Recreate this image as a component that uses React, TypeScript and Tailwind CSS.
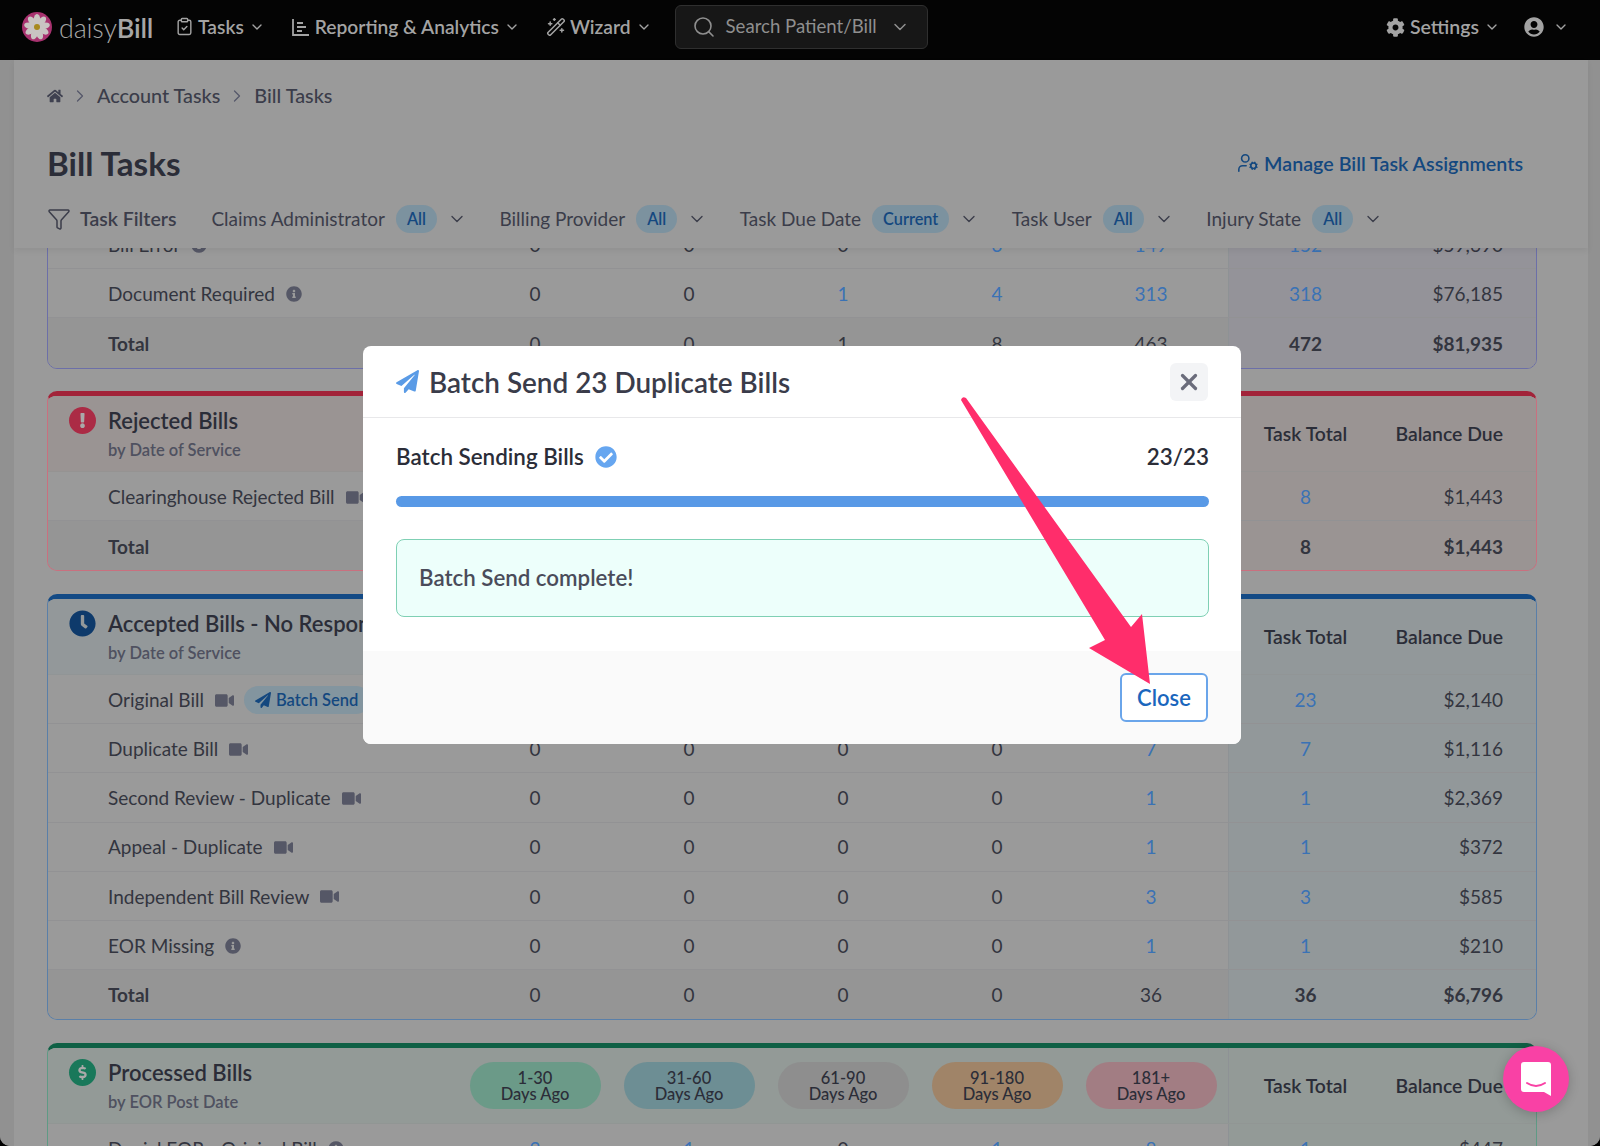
import type { ReactNode } from "react";
import { ChevronDown, ChevronRight, Filter, Search, UserCog, WandSparkles, ClipboardCheck, X } from "lucide-react";
import { FaCheckCircle, FaClock, FaCog, FaDollarSign, FaExclamation, FaHome, FaInfoCircle, FaPaperPlane, FaUserCircle, FaVideo } from "react-icons/fa";

type Note = "video" | "info" | "batch" | null;

interface Row {
  label: string;
  note?: Note;
  values: (string | number)[];
  total: string | number;
  balance: string;
  bold?: boolean;
}

const TOP_ROWS: Row[] = [
  { label: "Bill Error", note: "info", values: [0, 0, 0, 3, 149], total: 152, balance: "$59,690" },
  { label: "Document Required", note: "info", values: [0, 0, 1, 4, 313], total: 318, balance: "$76,185" },
  { label: "Total", values: [0, 0, 1, 8, 463], total: 472, balance: "$81,935", bold: true },
];

const REJECTED_ROWS: Row[] = [
  { label: "Clearinghouse Rejected Bill", note: "video", values: [0, 0, 0, 0, 8], total: 8, balance: "$1,443" },
  { label: "Total", values: [0, 0, 0, 0, 8], total: 8, balance: "$1,443", bold: true },
];

const ACCEPTED_ROWS: Row[] = [
  { label: "Original Bill", note: "batch", values: [0, 0, 0, 0, 23], total: 23, balance: "$2,140" },
  { label: "Duplicate Bill", note: "video", values: [0, 0, 0, 0, 7], total: 7, balance: "$1,116" },
  { label: "Second Review - Duplicate", note: "video", values: [0, 0, 0, 0, 1], total: 1, balance: "$2,369" },
  { label: "Appeal - Duplicate", note: "video", values: [0, 0, 0, 0, 1], total: 1, balance: "$372" },
  { label: "Independent Bill Review", note: "video", values: [0, 0, 0, 0, 3], total: 3, balance: "$585" },
  { label: "EOR Missing", note: "info", values: [0, 0, 0, 0, 1], total: 1, balance: "$210" },
  { label: "Total", values: [0, 0, 0, 0, 36], total: 36, balance: "$6,796", bold: true },
];

const PROCESSED_ROWS: Row[] = [
  { label: "Denial EOR - Original Bill", note: "info", values: [2, 1, 0, 1, 8], total: 1, balance: "$447" },
];

const AGE_CHIPS = [
  { top: "1-30", cls: "bg-[#6b9a88]" },
  { top: "31-60", cls: "bg-[#6d8e94]" },
  { top: "61-90", cls: "bg-[#8e8e8e]" },
  { top: "91-180", cls: "bg-[#a08468]" },
  { top: "181+", cls: "bg-[#a27d83]" },
];

const FILTERS = [
  { label: "Claims Administrator", chip: "All" },
  { label: "Billing Provider", chip: "All" },
  { label: "Task Due Date", chip: "Current" },
  { label: "Task User", chip: "All" },
  { label: "Injury State", chip: "All" },
];

const GRID = "grid grid-cols-[1fr_repeat(5,154px)_154px_154px] items-center";

function NavItem({ icon, label }: { icon: ReactNode; label: string }) {
  return (
    <div className="flex items-center text-[#a3a3a3]">
      {icon}
      <span className="ml-[4px] text-[19.2px] font-semibold">{label}</span>
      <ChevronDown className="ml-[5px] h-[16px] w-[16px]" strokeWidth={2} />
    </div>
  );
}

function DaisyLogo() {
  return (
    <svg viewBox="0 0 30 30" className="h-[30px] w-[30px]">
      <circle cx="15" cy="15" r="15" fill="#a8326f" />
      {[0, 40, 80, 120, 160, 200, 240, 280, 320].map((a) => (
        <ellipse key={a} cx="15" cy="7.5" rx="3.2" ry="5.5" fill="#c9c4c2" transform={`rotate(${a} 15 15)`} />
      ))}
      <circle cx="15" cy="15" r="3" fill="#a88a1e" />
    </svg>
  );
}

function ReportIcon() {
  return (
    <svg viewBox="0 0 20 20" className="h-[20px] w-[20px]" fill="none" stroke="currentColor" strokeWidth="1.8">
      <path d="M2 2v16h16M6 6h6M6 10h9M6 14h5" />
    </svg>
  );
}

function TopNav() {
  return (
    <div className="flex h-[60px] shrink-0 items-center bg-[#040404] pb-[6px] pl-[22px] pr-[31px]">
      <DaisyLogo />
      <div className="ml-[7px] text-[27px] leading-none tracking-[-0.2px] text-[#a6a6a6]">
        <span className="font-light">daisy</span>
        <span className="font-semibold">Bill</span>
      </div>
      <div className="ml-[22px] flex items-center gap-[26px]">
        <NavItem icon={<ClipboardCheck className="h-[19px] w-[19px]" strokeWidth={1.8} />} label="Tasks" />
        <NavItem icon={<ReportIcon />} label="Reporting & Analytics" />
        <NavItem icon={<WandSparkles className="h-[20px] w-[20px]" strokeWidth={1.8} />} label="Wizard" />
      </div>
      <div className="ml-[23px] flex h-[44px] w-[253px] items-center rounded-[6px] border border-[#2f2f2f] bg-[#171717] pl-[16px] pr-[17px] text-[#8f8f8f]">
        <Search className="h-[24px] w-[24px]" strokeWidth={1.6} />
        <span className="ml-[10px] text-[18.6px]">Search Patient/Bill</span>
        <ChevronDown className="ml-auto h-[20px] w-[20px]" strokeWidth={1.8} />
      </div>
      <div className="ml-auto flex items-center text-[#a3a3a3]">
        <FaCog className="h-[19px] w-[19px]" />
        <span className="ml-[5px] text-[19.5px] font-semibold">Settings</span>
        <ChevronDown className="ml-[5px] h-[16px] w-[16px]" strokeWidth={2} />
        <FaUserCircle className="ml-[24px] h-[20px] w-[20px]" />
        <ChevronDown className="ml-[9px] h-[16px] w-[16px]" strokeWidth={2} />
      </div>
    </div>
  );
}

function PageHeader() {
  return (
    <div className="relative z-10 h-[188px] shrink-0 bg-[#9a9a9a] pl-[33px] pr-[65px] shadow-[0_3px_6px_rgba(0,0,0,0.06)]">
      <div className="flex h-[71px] items-center text-[19.8px] font-medium text-[#3b3d4a]">
        <FaHome className="h-[16px] w-[16px] text-[#3f4150]" />
        <ChevronRight className="mx-[7px] h-[20px] w-[20px] text-[#55576a]" strokeWidth={1.5} />
        <span>Account Tasks</span>
        <ChevronRight className="mx-[7px] h-[20px] w-[20px] text-[#55576a]" strokeWidth={1.5} />
        <span>Bill Tasks</span>
      </div>
      <div className="flex h-[50px] items-center justify-between pt-[15px]">
        <h1 className="text-[33.2px] font-bold leading-none text-[#2b2d38]">Bill Tasks</h1>
        <div className="flex items-center text-[19.7px] font-semibold text-[#14487f]">
          <UserCog className="h-[22px] w-[22px]" strokeWidth={1.7} />
          <span className="ml-[5px]">Manage Bill Task Assignments</span>
        </div>
      </div>
      <div className="mt-[13px] flex h-[50px] items-center text-[19px] text-[#3b3d4a]">
        <Filter className="h-[24px] w-[24px]" strokeWidth={1.5} />
        <span className="ml-[9px] text-[19.5px] font-semibold">Task Filters</span>
        <div className="ml-[35px] flex items-center gap-[32.5px]">
          {FILTERS.map((f) => (
            <div key={f.label} className="flex items-center">
              <span>{f.label}</span>
              <span className="ml-[11px] flex h-[28px] items-center rounded-full bg-[#7c929f] px-[11px] text-[16.3px] font-semibold text-[#14487f]">
                {f.chip}
              </span>
              <ChevronDown className="ml-[10px] h-[20px] w-[20px] text-[#3b3d4a]" strokeWidth={1.6} />
            </div>
          ))}
        </div>
      </div>
    </div>
  );
}

function RowNote({ note }: { note?: Note }) {
  if (note === "info") return <FaInfoCircle className="ml-[11px] h-[16px] w-[16px] text-[#555766]" />;
  if (note === "video") return <FaVideo className="ml-[11px] h-[17px] w-[19px] text-[#555766]" />;
  if (note === "batch") {
    return (
      <>
        <FaVideo className="ml-[11px] h-[17px] w-[19px] text-[#555766]" />
        <span className="ml-[10px] flex h-[28px] items-center whitespace-nowrap rounded-full bg-[#83959f] pl-[11px] pr-[12px] text-[16.5px] font-semibold text-[#14487f]">
          <FaPaperPlane className="mr-[5px] h-[16px] w-[16px]" />
          Batch Send
        </span>
      </>
    );
  }
  return null;
}

function TableRow({ row, tint, last }: { row: Row; tint: string; last: boolean }) {
  return (
    <div className={`${GRID} h-[49.2px] text-[19px] text-[#33353f] ${last ? "" : "border-b border-[#929294]"} ${row.bold ? "bg-[#959595]" : ""}`}>
      <div className={`flex items-center pl-[60px] pt-[2px] ${row.bold ? "font-bold" : ""}`}>
        <span>{row.label}</span>
        <RowNote note={row.note} />
      </div>
      {row.values.map((v, i) => (
        <div key={i} className={`pt-[2px] text-center ${!row.bold && v !== 0 ? "text-[#3a72b5]" : ""}`}>
          {v}
        </div>
      ))}
      <div className={`flex h-full items-center justify-center border-l border-[#8e9295] pt-[2px] ${tint} ${row.bold ? "font-bold" : "text-[#3a72b5]"}`}>
        {row.total}
      </div>
      <div className={`flex h-full items-center justify-end pr-[33px] pt-[2px] ${tint} ${row.bold ? "font-bold" : ""}`}>
        {row.balance}
      </div>
    </div>
  );
}

interface SectionProps {
  icon?: ReactNode;
  title?: string;
  subtitle?: string;
  borderCls: string;
  headCls?: string;
  tint: string;
  rows: Row[];
  className?: string;
  showChips?: boolean;
}

function Section({ icon, title, subtitle, borderCls, headCls = "", tint, rows, className = "", showChips }: SectionProps) {
  return (
    <div className={`shrink-0 overflow-hidden rounded-[10px] border ${borderCls} ${className}`}>
      {title && (
        <div className={`${GRID} h-[76px] border-b border-[#8f9091]/40 ${headCls}`}>
          <div className="flex items-start self-start pl-[21px] pt-[3px]">
            <span className="mt-[8px] flex h-[27px] w-[27px] items-center justify-center rounded-full text-[#a9a9a9]">{icon}</span>
            <div className="ml-[12px] pt-[8px]">
              <div className="whitespace-nowrap text-[22px] font-semibold leading-[28px] text-[#2b2d38]">{title}</div>
              <div className="mt-[5px] text-[16.5px] font-semibold leading-[20px] text-[#4f5160]">{subtitle}</div>
            </div>
          </div>
          {AGE_CHIPS.map((c) => (
            <div key={c.top} className="flex justify-center">
              {showChips && (
                <div className={`flex h-[47px] w-[131px] flex-col items-center justify-center rounded-full pt-[2px] text-[16.5px] font-medium leading-[16px] text-[#2b2d38] ${c.cls}`}>
                  <span>{c.top}</span>
                  <span>Days Ago</span>
                </div>
              )}
            </div>
          ))}
          <div className={`flex h-full items-center justify-center border-l border-[#8e9295] text-[19.4px] font-semibold text-[#2b2d38] ${tint}`}>Task Total</div>
          <div className={`flex h-full items-center justify-end pr-[33px] text-[19.4px] font-semibold text-[#2b2d38] ${tint}`}>Balance Due</div>
        </div>
      )}
      {rows.map((r, i) => (
        <TableRow key={r.label} row={r} tint={tint} last={i === rows.length - 1} />
      ))}
    </div>
  );
}

function BatchModal() {
  return (
    <div className="absolute left-[363px] top-[346px] z-20 w-[878px] overflow-hidden rounded-[8px] bg-white">
      <div className="flex h-[72px] items-center justify-between border-b border-[#e8e8ea] pl-[33px] pr-[33px]">
        <div className="flex items-center">
          <FaPaperPlane className="h-[23px] w-[23px] text-[#5a9be6]" />
          <span className="ml-[10px] pt-[2px] text-[27.9px] font-semibold text-[#3a3c4a]">Batch Send 23 Duplicate Bills</span>
        </div>
        <div className="flex h-[38px] w-[38px] items-center justify-center rounded-[6px] bg-[#f3f4f6]">
          <X className="h-[26px] w-[26px] text-[#6a6c7b]" strokeWidth={3} />
        </div>
      </div>
      <div className="h-[233px] pl-[33px] pr-[32px] pt-[27px]">
        <div className="flex h-[24px] items-center justify-between text-[22.4px] font-semibold text-[#2b2d38]">
          <div className="flex items-center">
            <span>Batch Sending Bills</span>
            <FaCheckCircle className="ml-[11px] h-[22px] w-[22px] text-[#66a6f0]" />
          </div>
          <span>23/23</span>
        </div>
        <div className="mt-[27px] h-[11px] rounded-full bg-[#5899e6]" />
        <div className="mt-[32px] flex h-[78px] items-center rounded-[8px] border border-[#7fd0b4] bg-[#edfffb] pl-[22px] text-[22.3px] font-semibold text-[#4a4c5a]">
          Batch Send complete!
        </div>
      </div>
      <div className="flex h-[93px] justify-end bg-[#fafafa] pr-[33px] pt-[22px]">
        <div className="flex h-[49px] w-[88px] items-center justify-center rounded-[6px] border-2 border-[#6aa5ea] bg-white text-[22px] font-semibold text-[#1a66bd]">
          Close
        </div>
      </div>
    </div>
  );
}

function ArrowAnnotation() {
  return (
    <svg className="absolute left-0 top-0 z-30 h-[1146px] w-[1600px]" viewBox="0 0 1600 1146" fill="none">
      <path d="M961 400 Q962 396 966 398 L1131 627 L1142 614 L1150 684 L1089 648 L1105 640 Z" fill="#ff2d6b" />
    </svg>
  );
}

export default function App() {
  return (
    <div className="relative h-[1146px] w-[1600px] overflow-hidden bg-black font-['Lato','Liberation_Sans',sans-serif]">
      <div className="flex h-full flex-col overflow-hidden rounded-b-[10px] bg-[#9a9a9a]">
        <TopNav />
        <div className="flex min-h-0 flex-1">
          <div className="w-[14px] shrink-0 bg-[#919191]" />
          <div className="flex min-w-0 flex-1 flex-col">
            <PageHeader />
            <div className="min-h-0 flex-1 overflow-hidden pl-[33px] pr-[51px]">
              <Section borderCls="border-[#6c6fa8] -mt-[29px]" tint="bg-[#949399]" rows={TOP_ROWS} />
              <Section
                className="mt-[22.5px] border-t-[5px]"
                borderCls="border-[#c9707f] border-t-[#a22339]"
                headCls="bg-[#9a9493]"
                tint="bg-[#9a9493]"
                icon={<span className="flex h-[27px] w-[27px] items-center justify-center rounded-full bg-[#ab2b45]"><FaExclamation className="h-[15px] w-[15px]" /></span>}
                title="Rejected Bills"
                subtitle="by Date of Service"
                rows={REJECTED_ROWS}
              />
              <Section
                className="mt-[22.5px] border-t-[5px]"
                borderCls="border-[#5a7fa8] border-t-[#134a85]"
                headCls="bg-[#93989a]"
                tint="bg-[#92989a]"
                icon={<FaClock className="h-[27px] w-[27px] text-[#0e3a6b]" />}
                title="Accepted Bills - No Response"
                subtitle="by Date of Service"
                rows={ACCEPTED_ROWS}
              />
              <Section
                className="mt-[22.5px] border-t-[5px]"
                borderCls="border-[#5f9a85] border-t-[#0f6045]"
                headCls="bg-[#939a97]"
                tint="bg-[#939a97]"
                icon={<span className="flex h-[27px] w-[27px] items-center justify-center rounded-full bg-[#19785a]"><FaDollarSign className="h-[15px] w-[15px]" /></span>}
                title="Processed Bills"
                subtitle="by EOR Post Date"
                rows={PROCESSED_ROWS}
                showChips
              />
            </div>
          </div>
          <div className="w-[12px] shrink-0 bg-[#919191]" />
        </div>
      </div>
      <BatchModal />
      <ArrowAnnotation />
      {/* chat launcher */}
      <div className="absolute left-[1503px] top-[1046px] z-30 flex h-[66px] w-[66px] items-center justify-center rounded-full bg-[#f941a5] shadow-[0_2px_12px_rgba(0,0,0,0.2)]">
        <svg viewBox="0 0 30 34" className="h-[34px] w-[30px]">
          <path d="M3 0h24a3 3 0 0 1 3 3v31l-7-4H3a3 3 0 0 1-3-3V3a3 3 0 0 1 3-3z" fill="#fff" />
          <path d="M6 21q9 6 18 0" fill="none" stroke="#f941a5" strokeWidth="2" strokeLinecap="round" />
        </svg>
      </div>
    </div>
  );
}
